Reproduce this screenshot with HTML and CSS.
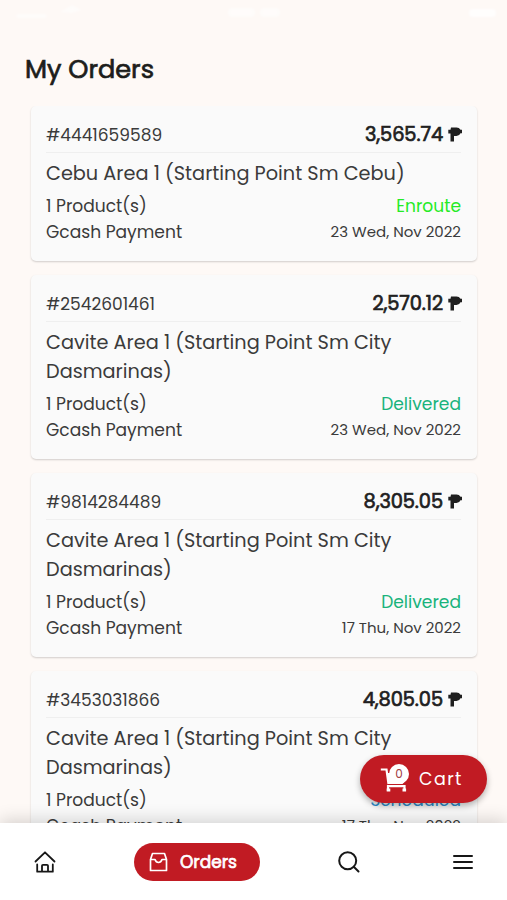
FILE: index.html
```html
<!DOCTYPE html>
<html lang="en">
<head>
<meta charset="utf-8">
<title>My Orders</title>
<link rel="stylesheet" href="styles.css">
</head>
<body>
<div class="app">
  <div class="status">
    <svg width="507" height="26" viewBox="0 0 507 26" fill="#fff"><g opacity=".5"><rect x="16" y="14" width="31" height="4" rx="2"/><path d="M60 12l12-7 10 5-10 3z"/><rect x="228" y="8" width="27" height="9" rx="4"/><rect x="260" y="8" width="20" height="9" rx="4"/></g><rect x="469" y="9" width="27" height="8" rx="4" opacity=".8"/></svg>
  </div>
  <h1 class="title">My Orders</h1>
  <main class="orders">
    <article class="card">
      <header class="head"><span class="number">#4441659589</span><span class="price">3,565.74<svg class="peso" viewBox="0 0 14 15"><path d="M3 .5h5.500q2.800 0 4 2.300H14v3.400h-1.500Q11.300 9 8.500 9H6v5.500H2.500V6.500H.3V2.800H2.500z"/></svg></span></header>
      <h2 class="area">Cebu Area 1 (Starting Point Sm Cebu)</h2>
      <div class="row"><span class="products">1 Product(s)</span><span class="state enroute">Enroute</span></div>
      <div class="row"><span class="payment">Gcash Payment</span><time class="date">23 Wed, Nov 2022</time></div>
    </article>
    <article class="card">
      <header class="head"><span class="number">#2542601461</span><span class="price">2,570.12<svg class="peso" viewBox="0 0 14 15"><path d="M3 .5h5.500q2.800 0 4 2.300H14v3.400h-1.500Q11.300 9 8.500 9H6v5.500H2.500V6.500H.3V2.800H2.500z"/></svg></span></header>
      <h2 class="area">Cavite Area 1 (Starting Point Sm City<br>Dasmarinas)</h2>
      <div class="row"><span class="products">1 Product(s)</span><span class="state delivered">Delivered</span></div>
      <div class="row"><span class="payment">Gcash Payment</span><time class="date">23 Wed, Nov 2022</time></div>
    </article>
    <article class="card">
      <header class="head"><span class="number">#9814284489</span><span class="price">8,305.05<svg class="peso" viewBox="0 0 14 15"><path d="M3 .5h5.500q2.800 0 4 2.300H14v3.400h-1.500Q11.300 9 8.500 9H6v5.500H2.500V6.500H.3V2.800H2.500z"/></svg></span></header>
      <h2 class="area">Cavite Area 1 (Starting Point Sm City<br>Dasmarinas)</h2>
      <div class="row"><span class="products">1 Product(s)</span><span class="state delivered">Delivered</span></div>
      <div class="row"><span class="payment">Gcash Payment</span><time class="date">17 Thu, Nov 2022</time></div>
    </article>
    <article class="card">
      <header class="head"><span class="number">#3453031866</span><span class="price">4,805.05<svg class="peso" viewBox="0 0 14 15"><path d="M3 .5h5.500q2.800 0 4 2.300H14v3.400h-1.500Q11.300 9 8.500 9H6v5.500H2.500V6.500H.3V2.800H2.500z"/></svg></span></header>
      <h2 class="area">Cavite Area 1 (Starting Point Sm City<br>Dasmarinas)</h2>
      <div class="row"><span class="products">1 Product(s)</span><span class="state scheduled">Scheduled</span></div>
      <div class="row"><span class="payment">Gcash Payment</span><time class="date">17 Thu, Nov 2022</time></div>
    </article>
  </main>
  <button class="cart">
    <span class="cart-icon">
      <svg width="30" height="30" viewBox="0 0 30 30" fill="none" stroke="#fff" stroke-width="2.200"><path d="M.8 5.500h5.700L8.500 20M8 27v-4.800h16.500V27"/><path d="M7.300 9h16l1.200 9-2 2H8.500z" fill="#fff" stroke="none"/><path d="M6.700 26h3.600M22.500 26h3.600" stroke-width="3"/></svg>
      <span class="badge">0</span>
    </span>
    <span class="cart-label">Cart</span>
  </button>
  <nav class="nav">
    <a class="item home"><svg width="22" height="24" viewBox="0 0 22 24" fill="none" stroke="#171717" stroke-width="1.800" stroke-linecap="round" stroke-linejoin="round"><path d="M1.500 11.500L11 2.300l9.500 9.200M3.200 14.500v7.200h15.600v-7.200M8 21.500v-5.700q0-1 1-1h4q1 0 1 1v5.700"/></svg></a>
    <a class="item active"><svg width="20" height="20" viewBox="0 0 20 20" fill="none" stroke="#fff" stroke-width="1.700" stroke-linecap="round" stroke-linejoin="round"><path d="M3.500 1.500h12l2 6v11H1.500v-11zM1.500 7.500H6q1 3 3.500 3t3.500-3h4.500"/></svg><span class="orders-label">Orders</span></a>
    <a class="item search"><svg width="22" height="22" viewBox="0 0 22 22" fill="none" stroke="#171717" stroke-width="2" stroke-linecap="round"><circle cx="9.700" cy="9.700" r="8.500"/><path d="M16 16l4.500 4.500"/></svg></a>
    <a class="item menu"><svg width="22" height="16" viewBox="0 0 22 16" stroke="#171717" stroke-width="2" stroke-linecap="round"><path d="M2 2h18M2 8h18M2 14h18"/></svg></a>
  </nav>
</div>
</body>
</html>
```

FILE: styles.css
```css
* { box-sizing: border-box; }
body { margin: 0; background: #fef9f6; color: #3b3b3b; font-family: Poppins, Inter, sans-serif; }
.app { position: relative; height: 900px; overflow: hidden; display: flex; flex-direction: column; }
.status { height: 50px; flex: none; }
.status svg { display: block; filter: blur(1px); }
.title { margin: 0 0 18px 25px; height: 38px; line-height: 38px; font-size: 25.600px; font-weight: 400; -webkit-text-stroke: .7px #1d1d1b; color: #1d1d1b; flex: none; }
.orders { flex: 1; min-height: 0; overflow: hidden; padding: 0 30px 0 31px; display: flex; flex-direction: column; gap: 14.500px; }
.card { flex: none; padding: 11px 16px 15.500px 15px; background: #fafafa; border-radius: 5px; box-shadow: 0 1px 2px rgba(0,0,0,.18); }
.head { display: flex; justify-content: space-between; align-items: center; height: 36px; border-bottom: 1px solid #efefef; }
.number { font-size: 17px; line-height: 26px; padding-top: 1px; }
.price { display: flex; align-items: center; margin-right: -1px; font-size: 19.400px; font-weight: 400; letter-spacing: -.1px; -webkit-text-stroke: .7px #1f1f1f; color: #1f1f1f; }
.peso { width: 14px; height: 15px; margin-left: 5px; fill: #1f1f1f; }
.area { margin: 6px 0 5px; font-size: 19.300px; line-height: 29px; font-weight: 400; white-space: nowrap; }
.row { height: 26px; display: flex; justify-content: space-between; align-items: center; font-size: 17.100px; }
.date { font-size: 15px; padding-bottom: 1px; }
.enroute { color: #24eb26; }
.delivered { color: #19b37c; }
.scheduled { color: #2c8fd0; }
.cart { position: absolute; left: 360px; top: 755px; width: 127px; height: 48px; border: 0; border-radius: 24px; padding: 0 0 0 20px; display: flex; align-items: center; gap: 9px; background: #c11b23; color: #fff; font: 400 17.500px Poppins, Inter, sans-serif; letter-spacing: 1.400px; box-shadow: 0 3px 6px rgba(0,0,0,.3); }
.cart-icon { position: relative; width: 30px; height: 30px; }
.badge { position: absolute; left: 9px; top: 0; width: 20px; height: 20px; border-radius: 50%; background: #fff; color: #a23a40; font-size: 12px; line-height: 20px; letter-spacing: 0; text-align: center; }
.nav { position: relative; flex: none; height: 77px; background: #fff; box-shadow: 0 -3px 16px rgba(0,0,0,.16); display: flex; align-items: center; }
.item { display: flex; }
.home { margin-left: 34px; }
.active { width: 126px; height: 38px; margin-left: 78px; padding-left: 15px; border-radius: 19px; background: #c11b23; color: #fff; align-items: center; gap: 11px; font-size: 17px; line-height: 24px; font-weight: 400; -webkit-text-stroke: .7px #fff; }
.search { margin-left: 78px; }
.menu { margin-left: 92px; }
```
